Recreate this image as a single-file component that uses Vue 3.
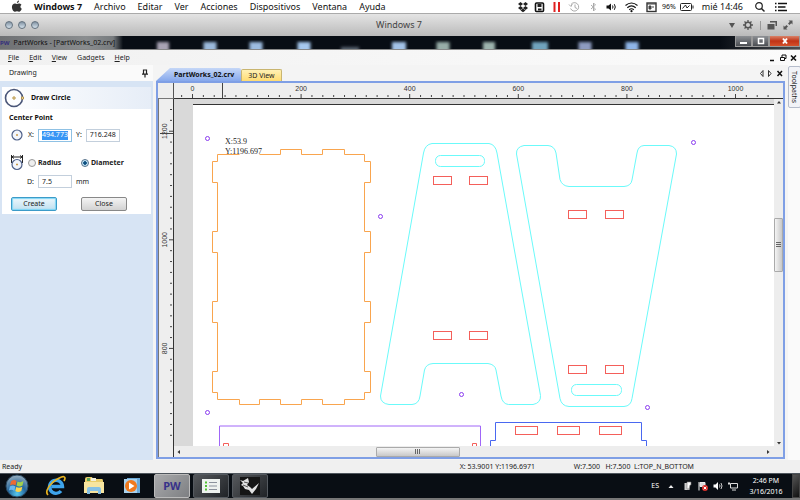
<script setup>
import { ref } from "vue";

const macMenu = ["Archivo", "Editar", "Ver", "Acciones", "Dispositivos", "Ventana", "Ayuda"];
const appMenu = ["File", "Edit", "View", "Gadgets", "Help"];

const centerX = ref("494.773");
const centerY = ref("716.248");
const size = ref("7.5");
const mode = ref("diameter");

// ruler scale: 20 units per minor tick
const step = 10.86;
const hTicks = Array.from({ length: 55 }, (_, i) => ({
  pos: 18.5 + (i - 1) * step,
  major: (i - 1) % 10 === 0,
  value: (i - 1) * 20,
}));
const vTicks = Array.from({ length: 31 }, (_, i) => ({
  pos: 10.5 + i * step,
  major: (i - 2) % 10 === 0,
  value: 1200 - (i - 2) * 20,
}));

const desktopIcons = [
  { x: 163, w: 12, color: "#a9a3b4" },
  { x: 210, w: 13, color: "#9bb9dc" },
  { x: 256, w: 13, color: "#9dbce0" },
  { x: 304, w: 13, color: "#a6c8ee" },
  { x: 350, w: 18, color: "#56616e" },
  { x: 399, w: 14, color: "#a3c2e8" },
  { x: 443, w: 13, color: "#98ada8" },
  { x: 489, w: 12, color: "#9db3ad" },
  { x: 540, w: 16, color: "#6fa3bd" },
  { x: 585, w: 13, color: "#8e9bc0" },
  { x: 632, w: 13, color: "#8fb5e8" },
];

const holes = [
  [207.5, 138.5],
  [380.5, 216.5],
  [461.5, 394.5],
  [207.5, 412.5],
  [693.5, 142.5],
  [647.5, 407.5],
];

const slots = [
  { x: 433.5, y: 176.5, w: 18 },
  { x: 469.5, y: 176.5, w: 18 },
  { x: 433.5, y: 331.5, w: 18 },
  { x: 469.5, y: 331.5, w: 18 },
  { x: 568.5, y: 210.5, w: 18 },
  { x: 605.5, y: 210.5, w: 18 },
  { x: 568.5, y: 365.5, w: 18 },
  { x: 605.5, y: 365.5, w: 18 },
  { x: 515.5, y: 426.5, w: 22 },
  { x: 557.5, y: 426.5, w: 22 },
  { x: 599.5, y: 426.5, w: 22 },
];
</script>

<template>
  <div class="screen">
    <header class="mac-bar">
      <svg class="apple" width="12" height="13" viewBox="0 0 12 13">
        <path d="M8 0.5C6.6 0.8 5.8 1.8 5.9 3C7.2 3 8.1 1.8 8 0.5ZM5.9 3.9C5 3.4 3 3 1.8 4.4C0.1 6.6 1.2 10 3.1 11.4C4.2 12 5 11.3 6 11.3C7 11.3 7.7 12 8.8 11.5C9.8 10.9 10.5 9.7 10.8 8.7C9.1 7.9 8.9 5.7 10.5 4.7C9.2 3 7.2 3.3 5.9 3.9Z" fill="#333" />
      </svg>
      <nav class="mac-menu">
        <a href="#" class="mac-app">Windows 7</a>
        <a v-for="item in macMenu" :key="item" href="#">{{ item }}</a>
      </nav>
      <div class="mac-status">
        <svg width="12" height="12" viewBox="0 0 12 12">
          <path d="M3.5 1L6 3L3.5 5L1 3ZM8.5 1L11 3L8.5 5L6 3ZM3.5 5L6 7L3.5 9L1 7ZM8.5 5L11 7L8.5 9L6 7ZM6 7.6L8.5 9.5L6 11.3L3.5 9.5Z" fill="#222" />
        </svg>
        <svg width="13" height="12" viewBox="0 0 13 12">
          <rect x="2.5" y="2" width="8" height="8.5" rx="1" fill="#fff" stroke="#111" stroke-width="1.6" />
          <path d="M4.5 3h4v3h-4zM5 7.5h3.5v2H5z" fill="#222" />
        </svg>
        <svg width="13" height="12" viewBox="0 0 13 12">
          <path d="M3.5 1h2v10h-2zM8 1h2v10H8z" fill="#e02020" />
        </svg>
        <svg width="15" height="12" viewBox="0 0 15 12">
          <path d="M4 3.5A4.2 4.2 0 1 1 3.6 7.5M2 3.5L4 5.5L5.3 3M8 3.5V6.5L10 7.5" fill="none" stroke="#aaa" />
        </svg>
        <svg width="15" height="12" viewBox="0 0 15 12">
          <path d="M5 4L9.5 8L7.5 10V2L9.5 4L5 8" fill="none" stroke="#aaa" />
        </svg>
        <svg width="13" height="12" viewBox="0 0 13 12">
          <path d="M1.5 4.5h2L6 2.5v7L3.5 7.5h-2z" fill="#111" />
          <path d="M7.5 4.5q1 1.5 0 3M9.3 3.2q2 2.8 0 5.6" fill="none" stroke="#111" />
        </svg>
        <svg width="19" height="12" viewBox="0 0 19 12">
          <path d="M3.5 4.5Q9.5-0.5 15.5 4.5M5.3 6.7Q9.5 3.2 13.7 6.7M7.2 8.7Q9.5 6.8 11.8 8.7" fill="none" stroke="#111" stroke-width="1.2" />
          <circle cx="9.5" cy="10.2" r="1.1" fill="#111" />
        </svg>
        <svg width="13" height="12" viewBox="0 0 13 12">
          <rect x="2" y="2" width="9" height="8.5" fill="#fff" stroke="#333" stroke-width="1.4" />
          <path d="M2 3h9M4 5h2v3H4zM7 6h2" stroke="#444" fill="#444" />
        </svg>
        <span class="battery-text">96%</span>
        <svg width="14" height="12" viewBox="0 0 14 12">
          <rect x="0.5" y="2.5" width="11" height="7" rx="1" fill="none" stroke="#222" />
          <path d="M13 4.5v3M2.5 7.5L5.5 4L7 7L9.5 4.5" fill="none" stroke="#222" />
        </svg>
        <time class="mac-clock">mié 14:46</time>
        <svg class="search" width="12" height="12" viewBox="0 0 12 12">
          <circle cx="5" cy="5" r="3.3" fill="none" stroke="#222" stroke-width="1.2" />
          <path d="M7.5 7.5L10.5 10.5" stroke="#222" stroke-width="1.5" />
        </svg>
        <svg width="14" height="12" viewBox="0 0 14 12">
          <path d="M1 2.5h1.5M4 2.5h9M1 6h1.5M4 6h7.5M1 9.5h1.5M4 9.5h9" stroke="#111" stroke-width="1.5" />
        </svg>
      </div>
    </header>

    <div class="vm-bar">
      <div class="lights"><button aria-label="Cerrar"></button><button aria-label="Minimizar"></button><button aria-label="Zoom"></button></div>
      <span class="vm-title">Windows 7</span>
      <div class="vm-tools">
        <svg width="8" height="12" viewBox="0 0 8 12"><path d="M1 4h6L4 9z" fill="#555" /></svg>
        <svg width="12" height="12" viewBox="0 0 12 12">
          <circle cx="6" cy="6" r="2.8" fill="none" stroke="#555" stroke-width="1.5" />
          <path d="M6 1v2M6 9v2M1 6h2M9 6h2M2.5 2.5L4 4M8 8l1.5 1.5M9.5 2.5L8 4M4 8L2.5 9.5" stroke="#555" stroke-width="1.3" />
        </svg>
        <i class="divider"></i>
        <svg width="10" height="12" viewBox="0 0 10 12"><path d="M3 2h7v5H8.5V3.5H3zM0.5 5h7v5.5h-7z" fill="#555" /></svg>
        <svg width="10" height="12" viewBox="0 0 10 12"><path d="M5.5 1.5h4v4L8.2 4.2L6.5 6L5 4.5L6.8 2.8zM4.5 10.5h-4v-4L1.8 7.8L3.5 6L5 7.5L3.2 9.2z" fill="#555" /></svg>
      </div>
    </div>

    <div class="win-title">
      <svg class="desktop" width="100%" height="14">
        <defs><filter id="glass"><feGaussianBlur stdDeviation="1.5" /></filter></defs>
        <g filter="url(#glass)">
          <rect v-for="d in desktopIcons" :key="d.x" :x="d.x - d.w / 2" :y="d.w > 17 ? 11 : 6" :width="d.w" height="12" :fill="d.color" />
        </g>
      </svg>
      <div class="title-glow"><b>PW</b><span>PartWorks - [PartWorks_02.crv]</span></div>
      <div class="win-buttons">
        <button aria-label="Minimize"><svg width="10" height="8"><path d="M1 5h7v2H1z" fill="#fff" /></svg></button>
        <button aria-label="Restore"><svg width="8" height="8"><rect x="1.5" y="1.5" width="5" height="5" fill="none" stroke="#fff" stroke-width="1.5" /></svg></button>
        <button class="close" aria-label="Close window"><svg width="8" height="8"><path d="M2 1.5L6 6.5M6 1.5L2 6.5" stroke="#fff" stroke-width="2" /></svg></button>
      </div>
    </div>

    <div class="menu-bar">
      <nav>
        <a v-for="item in appMenu" :key="item" href="#"><template v-if="item === 'Gadgets'">{{ item }}</template><template v-else><u>{{ item[0] }}</u>{{ item.slice(1) }}</template></a>
      </nav>
      <svg width="28" height="10" viewBox="0 0 28 10">
        <path d="M1 7.5h4M22 2.5L27 7.5M27 2.5L22 7.5" stroke="#111" stroke-width="1.6" />
        <path d="M13 4V2h4v3.5h-2M11.5 4.5h4v3h-4z" fill="none" stroke="#111" />
      </svg>
    </div>

    <main class="work">
      <aside class="drawing">
        <div class="panel-title">
          <span>Drawing</span>
          <svg width="8" height="9" viewBox="0 0 8 9"><path d="M2.5 1h3v4h-3zM1 5.2h6M4 5v3.5" fill="none" stroke="#222" stroke-width="1.2" /></svg>
        </div>
        <form class="card" @submit.prevent>
          <h2>
            <svg width="22" height="20" viewBox="0 0 22 20">
              <circle cx="11" cy="10" r="8.5" fill="none" stroke="#4a5678" stroke-width="1.6" />
              <path d="M10 9h2v2h-2zM18.500 9h2v2h-2z" fill="#fff" stroke="#b89440" />
            </svg>
            Draw Circle
          </h2>
          <h3>Center Point</h3>
          <div class="row">
            <svg width="14" height="14" viewBox="0 0 14 14">
              <circle cx="7" cy="7" r="5" fill="#f2f5fb" stroke="#4d5f88" stroke-width="1.2" />
              <path d="M6 7h2" stroke="#c79a4b" stroke-width="1.5" />
            </svg>
            <label for="cx">X:</label>
            <span class="field selected"><input id="cx" v-model="centerX" /></span>
            <label for="cy">Y:</label>
            <span class="field"><input id="cy" v-model="centerY" /></span>
          </div>
          <div class="row modes">
            <svg width="14" height="18" viewBox="0 0 14 18">
              <path d="M1.500 1v8M12.500 1v8M1.500 3h11M4 1.500L2 3L4 4.500M10 1.500L12 3L10 4.500" fill="none" stroke="#222" />
              <circle cx="7" cy="10.5" r="5" fill="#f2f5fb" stroke="#4d5f88" stroke-width="1.2" />
              <path d="M6 10.5h2" stroke="#c79a4b" stroke-width="1.5" />
            </svg>
            <label><input v-model="mode" type="radio" name="mode" value="radius" />Radius</label>
            <label><input v-model="mode" type="radio" name="mode" value="diameter" />Diameter</label>
          </div>
          <div class="row size">
            <label for="size">D:</label>
            <span class="field"><input id="size" v-model="size" /></span>
            <span>mm</span>
          </div>
          <div class="actions">
            <button class="primary">Create</button>
            <button type="button">Close</button>
          </div>
        </form>
      </aside>

      <section class="document">
        <div class="tabs">
          <button class="tab active">PartWorks_02.crv</button>
          <button class="tab">3D View</button>
          <svg width="24" height="9" viewBox="0 0 24 9">
            <path d="M4 1.5v6L1.5 4.5zM9.5 1.5v6L12 4.5z" fill="#fff" stroke="#333" />
            <path d="M18.5 2L23 7M23 2L18.5 7" stroke="#111" stroke-width="1.5" />
          </svg>
        </div>
        <div class="frame">
          <div class="corner"></div>
          <svg class="ruler-h" width="100%" height="16">
            <g v-for="t in hTicks" :key="t.pos">
              <path :d="`M${t.pos} ${t.major ? 11 : 12}v${t.major ? 4 : 2}`" />
              <text v-if="t.major" :x="t.pos" y="8">{{ t.value }}</text>
            </g>
            <path d="M48.5 0v15" />
          </svg>
          <svg class="ruler-v" width="16" height="100%">
            <g v-for="t in vTicks" :key="t.pos">
              <path :d="`M${t.major ? 10 : 11} ${t.pos}h${t.major ? 4 : 2}`" />
              <text v-if="t.major" :transform="`translate(8 ${t.pos}) rotate(-90)`">{{ t.value }}</text>
            </g>
            <path d="M1 34.5h13" />
          </svg>
          <div class="canvas">
            <svg width="100%" height="100%">
              <rect x="19" y="5" width="100%" height="100%" fill="#fff" />
              <path d="M19 5.5h2000" stroke="#333" />
              <g transform="translate(-174 -99)" fill="none">
                <path d="M217.5 154.5H239.5M259.5 154.5H280.5V149.5H301.5V154.5H322.5V149.5H344.5V154.5H364.5V161.5H370.5V182.5H364.5V231.5H370.5V252.5H364.5V301.5H370.5V322.5H364.5V371.5H370.5V392.5H364.5V399.5H344.5V404.5H322.5V399.5H301.5V404.5H280.5V399.5H259.5V404.5H239.5V399.5H217.5V392.5H212.5V371.5H217.5V322.5H212.5V301.5H217.5V252.5H212.5V231.5H217.5V182.5H212.5V161.5H217.5V154.5" stroke="#f9a54e" />
                <g stroke="#6bfafa">
                  <path d="M432 143.5H489Q495.5 144.5 497 153L540.5 395.5Q541 403 533 404.5H508.5Q502.5 404 501 396L496 370Q495 364.5 488 363.5H433Q426 364 424.5 370L420 396Q419 404 412 404.5H389Q380.5 403.5 380.5 396L423.5 153Q425 144.5 432 143.5Z" />
                  <path d="M524 145.5H548Q554.5 146 556 153L560 179.5Q562 186 569 186.5H624Q631 186 632 180L637 153Q638 146 644 145.5H669Q676.5 146.5 676.5 154L632 398.5Q631 406 624 406.5H569Q561.5 406 560 398.5L516.5 154Q516 147 524 145.5Z" />
                  <rect x="435.5" y="155.5" width="49" height="11" rx="5" />
                  <rect x="571.5" y="384.5" width="50" height="11" rx="5" />
                </g>
                <g stroke="#f45f5a">
                  <rect v-for="(s, i) in slots" :key="i" :x="s.x" :y="s.y" :width="s.w" height="8" />
                  <path d="M223.5 446V443.5H228.5V446M472.5 446V443.5H476.5V446" />
                </g>
                <path d="M219.5 446V426H480.5V446" stroke="#a066f8" />
                <path d="M490.5 446V440.5H495.5V422.5H641.5V440.5H646.5V446" stroke="#4a68f0" />
                <circle v-for="(h, i) in holes" :key="'h' + i" :cx="h[0]" :cy="h[1]" r="2" stroke="#8a3cf0" />
              </g>
              <g class="coords">
                <text x="51" y="45">X:53.9</text>
                <text x="51" y="55">Y:1196.697</text>
              </g>
            </svg>
          </div>
          <div class="scroll-v">
            <svg width="8" height="6"><path d="M2 4.5h4L4 2z" fill="#333" /></svg>
            <div class="thumb"><svg width="5" height="5"><path d="M0 0.5h5M0 2.5h5M0 4.5h5" stroke="#666" /></svg></div>
            <svg width="8" height="6"><path d="M2 2h4L4 4.5z" fill="#333" /></svg>
          </div>
          <div class="scroll-h">
            <svg width="6" height="8"><path d="M4 2v4L1.5 4z" fill="#333" /></svg>
            <div class="thumb"><svg width="5" height="5"><path d="M0.5 0v5M2.5 0v5M4.5 0v5" stroke="#666" /></svg></div>
            <svg width="6" height="8"><path d="M2 2v4L4.5 4z" fill="#333" /></svg>
          </div>
        </div>
      </section>

      <aside class="dock"><button>Toolpaths</button></aside>
    </main>

    <footer class="status">
      <span class="ready">Ready</span>
      <span class="pos">X: 53.9001 Y:1196.6971</span>
      <span>W:7.500 &nbsp; H:7.500 &nbsp;L:TOP_N_BOTTOM</span>
    </footer>

    <div class="taskbar">
      <button class="start" aria-label="Start">
        <svg width="24" height="24" viewBox="0 0 24 24">
          <defs>
            <radialGradient id="orb" cx="50%" cy="85%" r="80%"><stop offset="0" stop-color="#57c9ee" /><stop offset="0.5" stop-color="#25679d" /><stop offset="1" stop-color="#8fa8bb" /></radialGradient>
          </defs>
          <circle cx="12" cy="12" r="11" fill="url(#orb)" stroke="#28465e" />
          <path d="M6 7.5Q9 5 11.5 7L10.5 11.5Q8 9.5 5 11.5Z" fill="#ee6a32" />
          <path d="M12.5 7.5Q15.5 9 18.5 7L17.5 11.5Q14.5 13.5 11.5 11.5Z" fill="#a3d04c" />
          <path d="M4.8 12.5Q8 10.5 10.3 12.5L9.3 17Q6.5 15 4 16.5Z" fill="#6cb8f0" />
          <path d="M11.3 13Q14 14.5 17.3 12.8L16.3 17Q13 19 10.3 17Z" fill="#ffd34a" />
        </svg>
      </button>
      <button class="pin" aria-label="Internet Explorer">
        <svg width="22" height="22" viewBox="0 0 22 22">
          <path d="M6.5 11.5H17.5A6.5 6.5 0 1 0 16 16" fill="none" stroke="#3ea4ec" stroke-width="3.4" />
          <path d="M3 20Q-1 16 8 7Q19-1 20 3Q20 4 19 6" fill="none" stroke="#e8b21e" stroke-width="1.7" />
        </svg>
      </button>
      <button class="pin" aria-label="Explorer">
        <svg width="22" height="20" viewBox="0 0 22 20">
          <path d="M2 3Q2 1 4 1H9L10 3H19Q20 3 20 5V17H2Z" fill="#e9cd6c" />
          <path d="M4 2h3v3H4z" fill="#5aa45a" /><path d="M8 2h5v3H8z" fill="#f3f0dc" />
          <path d="M1 6H21V17H1Z" fill="#f7e5a0" />
          <path d="M4 18V13Q4 11 6 11H16Q18 11 18 13V18H15V15H7V18Z" fill="#86c1e6" />
        </svg>
      </button>
      <button class="pin" aria-label="Media Player">
        <svg width="18" height="18" viewBox="0 0 18 18">
          <rect x="4" y="1" width="13" height="15" fill="#6caad8" /><rect x="1" y="2" width="13" height="14" fill="#a9d2ee" />
          <circle cx="8" cy="9" r="6" fill="#f07a1e" /><path d="M6 5.5L11.5 9L6 12.5Z" fill="#fff" />
        </svg>
      </button>
      <button class="task current">PW</button>
      <button class="task" aria-label="List">
        <svg width="18" height="16" viewBox="0 0 18 16"><path d="M0 1h18v14H0z" fill="#eef2ef" /><path d="M3 4.5h2M3 8h2M3 11.5h2" stroke="#52c234" stroke-width="2" /><path d="M7 4.5h8M7 8h8M7 11.5h8" stroke="#8b929c" /></svg>
      </button>
      <button class="task" aria-label="Rhino">
        <svg width="20" height="18" viewBox="0 0 20 18"><path d="M0 0h20v18H0z" fill="#151515" /><path d="M0 3L3 4L8 1L9 5L7 8L10 10L12 12L19 6L16 12L12 17L9 13L5 12L3 9L1 8L3 6Z" fill="#e2e2e2" /><path d="M4 5L8 6M3 8L8 10" stroke="#555" /></svg>
      </button>
      <div class="tray">
        <span>ES</span>
        <svg class="more" width="6" height="10"><path d="M0.5 7h5L3 4z" fill="#eee" /></svg>
        <svg width="10" height="10" viewBox="0 0 10 10"><path d="M1.5 2h5v7h-5z" fill="#ccc" /><path d="M4 1h4v3H7l-1 4H4z" fill="#fff" stroke="#777" stroke-width="0.6" /></svg>
        <svg width="10" height="10" viewBox="0 0 10 10"><path d="M1 1v8.5M2 1.5h5v4H2z" fill="#ddd" stroke="#eee" /><circle cx="7" cy="7" r="3" fill="#d9302a" /><path d="M5.7 5.7L8.3 8.3M8.3 5.7L5.7 8.3" stroke="#fff" /></svg>
        <svg width="10" height="10" viewBox="0 0 10 10"><path d="M0.5 3.5h2L5 1v8L2.5 6.5h-2z" fill="#fff" /><path d="M6.5 3.5q1 1.5 0 3M8 2q2 3 0 6" fill="none" stroke="#ccc" /></svg>
        <svg width="10" height="10" viewBox="0 0 10 10"><path d="M2.5 2.5h7v4.5h-7zM4 9h4M1 1v3M0 2.5h2" fill="none" stroke="#ddd" /></svg>
        <time>2:46 PM<br />3/16/2016</time>
        <button class="show-desktop" aria-label="Show desktop"></button>
      </div>
    </div>
  </div>
</template>

<style>
body {
  overflow: hidden;
}
</style>

<style scoped>
.screen {
  display: flex;
  flex-direction: column;
  height: 100vh;
  box-sizing: border-box;
  border-bottom: 2px solid #777;
  background: #f0f0f0;
  color: #222;
  font-family: "Noto Sans", "Open Sans", sans-serif;
  font-size: 7px;
  line-height: 10px;
}

svg {
  display: block;
  flex: none;
}

a {
  color: inherit;
  text-decoration: none;
}

button,
input {
  box-sizing: border-box;
  margin: 0;
  padding: 0;
  border: 0;
  color: inherit;
  font: inherit;
}

.mac-bar {
  display: flex;
  align-items: center;
  flex: none;
  height: 13px;
  padding: 0 12px 0 11px;
  background: #fff;
  color: #111;
  font-size: 9px;
  white-space: nowrap;
}

.mac-menu {
  display: flex;
  gap: 12px;
  margin-left: 11px;
}

.mac-app {
  font-weight: bold;
}

.mac-status {
  display: flex;
  align-items: center;
  gap: 4px;
  margin-left: auto;
}

.battery-text {
  font-size: 7px;
}

.mac-clock {
  margin: 0 7px 0 4px;
}

.search {
  margin-right: 4px;
}

.vm-bar {
  display: grid;
  grid-template-columns: 1fr auto 1fr;
  align-items: center;
  flex: none;
  height: 23px;
  box-sizing: border-box;
  padding: 0 7px 0 5px;
  border-top: 1px solid #aaa;
  background: linear-gradient(#e4e4e4, #bababa);
  color: #444;
  font-size: 9px;
}

.lights {
  display: flex;
  gap: 5px;
}

.lights button {
  width: 8px;
  height: 8px;
  border: 1px solid #64727f;
  border-radius: 50%;
  background: linear-gradient(#8293a3, #d5e2ec);
}

.vm-tools {
  display: flex;
  align-items: center;
  justify-content: flex-end;
  gap: 6px;
}

.divider {
  width: 1px;
  height: 9px;
  background: #999;
}

.win-title {
  position: relative;
  display: flex;
  justify-content: space-between;
  flex: none;
  height: 14px;
  box-sizing: border-box;
  border-bottom: 1px solid #888;
  background: linear-gradient(90deg, #080d14 90%, #4b4e52);
  overflow: hidden;
}

.desktop {
  position: absolute;
  top: 0;
  left: 0;
}

.title-glow {
  position: relative;
  display: flex;
  align-items: center;
  gap: 4px;
  padding-right: 8px;
  background: linear-gradient(90deg, #6e7073, #8a8d8f 70%, #777b7e 92%, transparent);
  color: #111;
}

.title-glow b {
  color: #342f7c;
  font-size: 6px;
}

.win-buttons {
  position: relative;
  display: flex;
  height: 11px;
}

.win-buttons button {
  display: flex;
  align-items: center;
  justify-content: center;
  width: 17px;
  border: 1px solid #999;
  border-top: 0;
  background: linear-gradient(#8d9094, #4a4d52);
}

.win-buttons .close {
  width: 31px;
  background: linear-gradient(#d98268, #c03316 50%, #d4502a);
}

.menu-bar {
  display: flex;
  align-items: center;
  justify-content: space-between;
  flex: none;
  height: 15px;
  padding: 0 3px 0 8px;
  background: linear-gradient(90deg, #f1f1f1, #fbfbfb);
}

.menu-bar nav {
  display: flex;
  gap: 10px;
}

.work {
  display: flex;
  flex: 1;
  gap: 3px;
  min-height: 0;
  background: #f4f4f4;
}

.drawing {
  flex: none;
  width: 153px;
  background: #d7e4f4;
}

.panel-title {
  display: flex;
  align-items: center;
  justify-content: space-between;
  height: 16px;
  padding: 0 4px 0 9px;
  background: #fafafa;
}

.card {
  margin: 6px 2px 0;
  padding-bottom: 3px;
  background: #fff;
}

.card h2,
.card h3 {
  margin: 0;
  color: #111;
  font-size: 7px;
}

.card h2 {
  display: flex;
  align-items: center;
  gap: 6px;
  height: 22px;
  padding-left: 1px;
  background: linear-gradient(90deg, #fff, #e6edf7);
}

.card h3 {
  padding: 4px 7px 3px;
}

.row {
  display: flex;
  align-items: center;
  gap: 4px;
  height: 18px;
  padding-left: 8px;
}

.field {
  display: flex;
  width: 34px;
  height: 13px;
  box-sizing: border-box;
  padding: 1px 3px;
  border: 1px solid #c3cfdc;
  background: #fff;
}

.field input {
  width: 100%;
  background: transparent;
}

.selected {
  border-color: #8fc1e4;
}

.selected input {
  background: #3795f5;
  color: #fff;
}

.modes {
  height: 24px;
  margin-top: 7px;
  font-weight: bold;
}

.modes label {
  display: flex;
  align-items: center;
  gap: 2px;
  width: 49px;
}

.modes input {
  appearance: none;
  width: 8px;
  height: 8px;
  border: 1px solid #999;
  border-radius: 50%;
  background: #eee;
}

.modes input:checked {
  border-color: #56718a;
  background: radial-gradient(#0d4f80 35%, #bfe2f5 50%);
}

.size {
  height: 13px;
  padding-left: 25px;
}

.actions {
  display: flex;
  gap: 24px;
  padding: 9px 9px 0;
}

.actions button {
  width: 46px;
  height: 14px;
  border: 1px solid #888;
  border-radius: 2px;
  background: linear-gradient(#f4f4f4, #d2d2d2);
}

.actions .primary {
  border-color: #3c9bc8;
  background: linear-gradient(#edf7fc, #bfe0f0);
  box-shadow: inset 0 0 1px 1px #7fd6f5;
}

.document {
  display: flex;
  flex: 1;
  flex-direction: column;
  min-width: 0;
  padding-bottom: 1px;
}

.tabs {
  display: flex;
  align-items: flex-end;
  flex: none;
  height: 16px;
  padding-right: 2px;
}

.tab {
  height: 12px;
  padding: 0 6px;
  border: 1px solid #c9b570;
  border-bottom: 0;
  border-radius: 2px 2px 0 0;
  background: linear-gradient(#fff1b5, #ffdc72);
}

.tab.active {
  height: 13px;
  padding: 0 7px 0 18px;
  border: 0;
  background: linear-gradient(#c5d7f7, #86a8ec);
  clip-path: polygon(0 100%, 14px 0, 100% 0, 100% 100%);
  color: #111;
  font-weight: bold;
}

.tabs svg {
  align-self: center;
  margin-left: auto;
}

.frame {
  display: grid;
  flex: 1;
  grid-template-columns: 16px 1fr 9px;
  grid-template-rows: 16px 1fr 11px;
  min-height: 0;
  border: 2px solid #7f9fe5;
  background: #eee;
}

.corner {
  border-right: 1px solid #555;
  border-bottom: 1px solid #777;
}

.ruler-h {
  grid-column: 2 / 4;
  border-bottom: 1px solid #333;
  box-sizing: border-box;
}

.ruler-v {
  grid-row: 2 / 4;
  border-left: 1px solid #777;
  border-right: 1px solid #333;
  box-sizing: border-box;
}

.ruler-h path,
.ruler-v path {
  stroke: #444;
}

.ruler-h text,
.ruler-v text {
  fill: #333;
  font-family: "Liberation Sans", sans-serif;
  font-size: 7px;
  text-anchor: middle;
}

.canvas {
  min-height: 0;
  overflow: hidden;
  background: #d9d9d9;
}

.coords text {
  fill: #222;
  font-family: "Liberation Serif", serif;
  font-size: 8px;
}

.scroll-v,
.scroll-h {
  display: flex;
  align-items: center;
  justify-content: space-between;
  background: #ededed;
}

.scroll-v {
  flex-direction: column;
}

.scroll-h {
  grid-column: 2 / 4;
  padding: 0 12px 0 2px;
}

.thumb {
  display: flex;
  align-items: center;
  justify-content: center;
  box-sizing: border-box;
  border: 1px solid #aaa;
  border-radius: 1px;
}

.scroll-v .thumb {
  width: 9px;
  height: 54px;
  margin-bottom: 56px;
  background: linear-gradient(90deg, #f4f4f4, #c8c8c8);
}

.scroll-h .thumb {
  width: 84px;
  height: 10px;
  margin-right: 112px;
  background: linear-gradient(#f4f4f4, #c8c8c8);
}

.dock {
  flex: none;
  width: 12px;
  background: #fafafa;
}

.dock button {
  width: 13px;
  height: 42px;
  margin-top: 1px;
  border: 1px solid #b5bccb;
  border-radius: 2px;
  background: #f2f3f7;
  line-height: 11px;
  writing-mode: vertical-rl;
}

.status {
  display: flex;
  align-items: center;
  flex: none;
  height: 13px;
  padding: 0 2px;
  background: #f0f0f0;
}

.ready {
  width: 57.5%;
}

.pos {
  width: 114px;
}

.taskbar {
  display: flex;
  align-items: center;
  flex: none;
  height: 25px;
  box-sizing: border-box;
  padding-left: 5px;
  border-top: 1px solid #4e555c;
  background: #090e14;
  color: #fff;
}

.taskbar button {
  display: flex;
  align-items: center;
  justify-content: center;
  background: transparent;
}

.start {
  width: 24px;
  margin-right: 8px;
}

.pin {
  width: 38px;
}

.taskbar .task {
  width: 36px;
  height: 24px;
  margin-left: 3px;
  border: 1px solid #555a60;
  border-radius: 2px;
  background: linear-gradient(135deg, #55585c, #202327);
}

.taskbar .current {
  border-color: #bbb;
  background: linear-gradient(135deg, #a9aaac, #7d7f82);
  color: #37318a;
  font-size: 11px;
  font-weight: bold;
}

.tray {
  display: flex;
  align-items: center;
  gap: 5px;
  height: 100%;
  margin-left: auto;
}

.more {
  margin: 0 4px;
}

.tray time {
  width: 42px;
  margin-left: 2px;
  line-height: 11px;
  text-align: center;
}

.taskbar .show-desktop {
  width: 8px;
  height: 100%;
  border: 1px solid #444;
  background: linear-gradient(135deg, #555, #111);
}
</style>
